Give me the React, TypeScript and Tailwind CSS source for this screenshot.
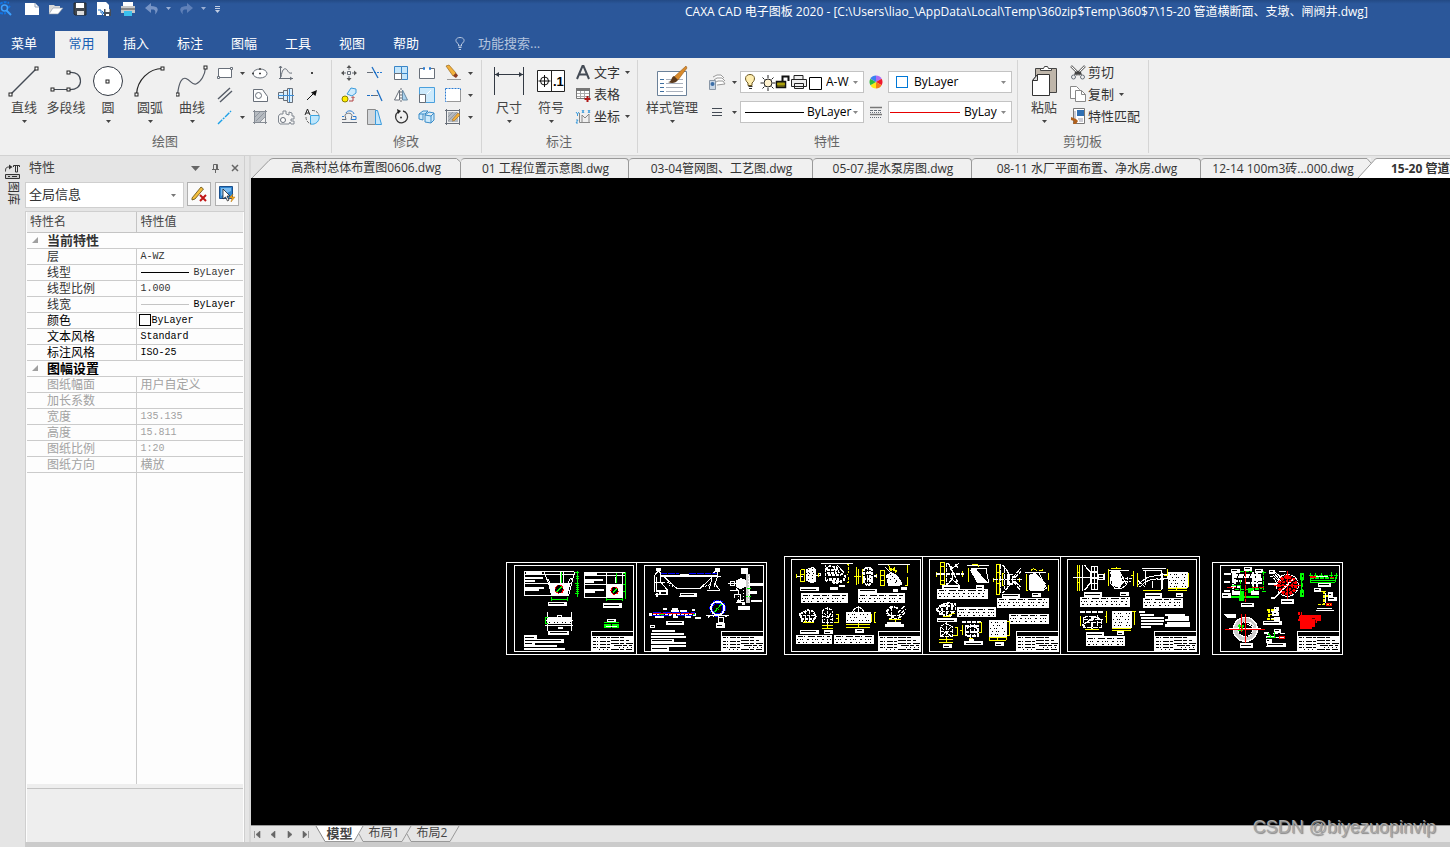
import type { ReactNode } from 'react';

const uiFont = "font-['Open_Sans','Noto_Sans_CJK_SC',sans-serif]";

type IconProps = { w?: number; h?: number; children: ReactNode };

const Icon = ({ w = 18, h = 18, children }: IconProps) => (
  <svg width={w} height={h} viewBox={`0 0 ${w} ${h}`} fill="none" stroke="#686f79" className="shrink-0" aria-hidden="true">
    {children}
  </svg>
);

const Caret = ({ className = 'text-[#444]' }: { className?: string }) => (
  <svg width="5" height="3" viewBox="0 0 5 3" className={`shrink-0 ${className}`} aria-hidden="true">
    <path d="M0 0h5L2.5 3z" fill="currentColor" />
  </svg>
);

const Handle = ({ x, y }: { x: number; y: number }) => (
  <rect x={x - 1.5} y={y - 1.5} width="3" height="3" fill="#fff" stroke="#222" />
);

const drawTools = [
  {
    label: '直线',
    menu: true,
    icon: (
      <Icon w={32} h={34}>
        <path d="M2.500 30.500L28.500 4.500" stroke="#444b55" strokeWidth="1.5" />
        <Handle x={2.5} y={30.5} />
        <Handle x={28.5} y={4.5} />
      </Icon>
    ),
  },
  {
    label: '多段线',
    menu: false,
    icon: (
      <Icon w={32} h={34}>
        <path d="M2.500 25.500H18.500M18.500 8.500c8 -1 12 3 12 8.500s-4 9 -12 8.500" stroke="#444b55" strokeWidth="1.2" />
        <Handle x={2.5} y={25.5} />
        <Handle x={18.5} y={25.5} />
        <Handle x={18.5} y={8.5} />
      </Icon>
    ),
  },
  {
    label: '圆',
    menu: true,
    icon: (
      <Icon w={32} h={34}>
        <circle cx="16" cy="17" r="14.500" fill="#fff" stroke="#333a44" />
        <Handle x={15.5} y={17.5} />
      </Icon>
    ),
  },
  {
    label: '圆弧',
    menu: true,
    icon: (
      <Icon w={32} h={34}>
        <path d="M2.500 30.500C3 16 15 4.500 28.500 4.500" stroke="#222" strokeWidth="1.2" />
        <Handle x={2.5} y={30.5} />
        <Handle x={28.5} y={4.5} />
      </Icon>
    ),
  },
  {
    label: '曲线',
    menu: true,
    icon: (
      <Icon w={32} h={34}>
        <path d="M1.500 30.500C3 18 6 13 10 14.500c5 2 6 7 10 5.500C25 18 29 11 29.500 3.500" stroke="#555b66" strokeWidth="1.2" />
        <Handle x={1.5} y={30.5} />
        <Handle x={29.5} y={3.5} />
      </Icon>
    ),
  },
];

// small tool rows of the drawing group: first tool, has menu, then three plain ones
const drawRows = [
  {
    menu: true,
    tools: [
      {
        name: '矩形',
        icon: (
          <Icon>
            <path d="M2.500 4.500h13v9h-13z" fill="#fff" />
            <path d="M1.500 12.500h2v2h-2zM14.500 3.500h2v2h-2z" fill="#fff" />
          </Icon>
        ),
      },
      {
        name: '椭圆',
        icon: (
          <Icon>
            <ellipse cx="9" cy="9.500" rx="7" ry="4.500" fill="#fff" />
            <path d="M8.500 4.500h1v1h-1zM1.500 9h1v1h-1zM8.500 9h1v1h-1z" stroke="#444" />
          </Icon>
        ),
      },
      {
        name: '公式曲线',
        icon: (
          <Icon>
            <path d="M3.500 2v13M2 14.500h14M4 13C5 6 7 4 9 5s2 5 6 4M2 4l1.500-2L5 4M13 13l2 1.500L13 16" />
          </Icon>
        ),
      },
      {
        name: '点',
        icon: (
          <Icon>
            <rect x="8" y="8" width="2" height="2" fill="#444" stroke="none" />
          </Icon>
        ),
      },
    ],
  },
  {
    menu: false,
    tools: [
      {
        name: '平行线',
        icon: (
          <Icon>
            <path d="M2 13L14 2M4 16L16 5" stroke="#555b66" strokeWidth="1.400" />
          </Icon>
        ),
      },
      {
        name: '孔轴轮廓',
        icon: (
          <Icon>
            <path d="M2.500 3.500h9l5 7v5h-14z" fill="#fff" />
            <circle cx="7.500" cy="9.500" r="3" />
          </Icon>
        ),
      },
      {
        name: '轴',
        icon: (
          <Icon>
            <path d="M1.500 6.500h5v6h-5zM6.500 4.500h4v10h-4zM10.500 2.500h5v14h-5z" fill="#d9efff" />
            <path d="M1 9.500h16M12.500 3v13" stroke="#3b8ed8" />
          </Icon>
        ),
      },
      {
        name: '箭头',
        icon: (
          <Icon>
            <path d="M4 14L13 5" stroke="#111" />
            <path d="M14 4l-1.500 6L8 6.500z" fill="#111" stroke="none" />
          </Icon>
        ),
      },
    ],
  },
  {
    menu: true,
    tools: [
      {
        name: '中心线',
        icon: (
          <Icon>
            <path d="M2 16L15 3" stroke="#1ba0e8" strokeWidth="1.400" strokeDasharray="6 1 2 1" />
          </Icon>
        ),
      },
      {
        name: '剖面线',
        icon: (
          <Icon>
            <path d="M3.500 2v14M14.500 2v14M2 3.500h14M2 14.500h14" stroke="#858b93" />
            <path d="M4 4h10v5l-5 5H4z" fill="#b6bbc1" stroke="none" />
            <path d="M9 14l5-5M4 9l5-5M5 13l8-8" stroke="#9298a0" />
          </Icon>
        ),
      },
      {
        name: '齿轮',
        icon: (
          <Icon>
            <path d="M6 6V3h3v3l3 1V4l3 1v3h2v3h-3v2h3v3h-3l-1-2-1 2H3l-1.500-2V8L3 6z" fill="#f5f5f5" stroke="#808790" />
            <circle cx="6" cy="12" r="2.500" fill="#fff" />
          </Icon>
        ),
      },
      {
        name: '局部放大',
        icon: (
          <Icon>
            <path d="M7.500 7.500H16A7 7 0 017.500 16z" fill="#bfe6fb" stroke="#3aa5e2" />
            <path d="M9 2.500a6.500 6.500 0 017 5M3 9a7 7 0 005 7" stroke="#666" strokeDasharray="3 1" />
            <path d="M2 7L4.500 1 7 7M3 5h3" stroke="#222" />
          </Icon>
        ),
      },
    ],
  },
];

const modifyRows = [
  [
    {
      name: '平移',
      icon: (
        <Icon>
          <path d="M9 1l2.500 3h-5zM9 17l2.500-3h-5zM1 9l3-2.500v5zM17 9l-3-2.500v5z" fill="#555" stroke="none" />
          <path d="M7.500 7.500h3v3h-3zM9 4v2M9 12v2M4 9h2M12 9h2" />
        </Icon>
      ),
    },
    {
      name: '裁剪',
      icon: (
        <Icon>
          <path d="M1 8.500h6" />
          <path d="M8 8.500h9" strokeDasharray="2 1" stroke="#2b7cd3" />
          <path d="M6 3l6 11" stroke="#1d6fc4" strokeWidth="1.300" />
        </Icon>
      ),
    },
    {
      name: '阵列',
      icon: (
        <Icon>
          <path d="M2.500 2.500h7v7h-7zM9.500 2.500h6v7h-6zM9.500 9.500h6v6h-6z" fill="#c5e6fb" stroke="#3a86c8" />
          <path d="M2.500 9.500h7v6h-7z" fill="#fff" />
        </Icon>
      ),
    },
    {
      name: '打断',
      icon: (
        <Icon>
          <path d="M6 4.500H1.500v10h15v-10H12" fill="#fff" />
          <path d="M5.500 3.500h1v2h-1zM11.500 3.500h1v2h-1z" stroke="#2b7cd3" />
        </Icon>
      ),
    },
    {
      name: '删除',
      icon: (
        <Icon>
          <path d="M2 2l3-1 7 8-3 3z" fill="#f2b13c" stroke="#9b6a20" strokeWidth=".7" />
          <path d="M9 12l3-3 2 2.500-2 2.500z" fill="#8d3d20" stroke="none" />
          <path d="M3 15.500h14" stroke="#999" />
        </Icon>
      ),
    },
  ],
  [
    {
      name: '平移复制',
      icon: (
        <Icon>
          <circle cx="5" cy="13" r="3" fill="#ffed00" stroke="#8a8000" />
          <path d="M7 8l4-6 5 1v4l-4 3z" fill="#cdeafc" stroke="#3a9bdc" />
          <path d="M9 15h4v-4M11.500 12L13 10.500l1.500 1.500" stroke="#b04040" />
        </Icon>
      ),
    },
    {
      name: '延伸',
      icon: (
        <Icon>
          <path d="M1 9.500h3M5 9.500h2M8 9.500h2" stroke="#1d6fc4" />
          <path d="M7 9.500h5" />
          <path d="M11 4l5 11" stroke="#1d6fc4" strokeWidth="1.300" />
        </Icon>
      ),
    },
    {
      name: '镜像',
      icon: (
        <Icon>
          <path d="M7.500 4v10h-5z" fill="#fff" />
          <path d="M10.500 4v10h5z" fill="#a9d2ef" stroke="#6b8ba4" />
          <path d="M9 2v14" strokeDasharray="2 1" />
        </Icon>
      ),
    },
    {
      name: '缩放',
      icon: (
        <Icon>
          <path d="M1.500 1.500h15v15h-15z" fill="#cdeafc" stroke="#4aa0dd" />
          <path d="M1.500 8.500h6v8h-6z" fill="#fff" />
          <path d="M13 4l-4 4" stroke="#fff" />
        </Icon>
      ),
    },
    {
      name: '拉伸',
      icon: (
        <Icon>
          <path d="M1.500 2.500h15v13h-15z" fill="#fff" strokeDasharray="2 1" stroke="#2b7cd3" />
          <path d="M3 15.500h14M16.500 4v12" stroke="#999" />
        </Icon>
      ),
    },
  ],
  [
    {
      name: '等距线',
      icon: (
        <Icon>
          <path d="M2 11.500h4l-1-4c0-3 7-3 7 0l-1 4h5M2 14.500h15" />
          <path d="M2 8.500h2M13 8.500h3v3h-5M6 5c1-3 7-3 8 1" stroke="#2b7cd3" />
        </Icon>
      ),
    },
    {
      name: '过渡',
      icon: (
        <Icon>
          <path d="M1.500 1.500h8v15h-8z" fill="#d3d6d9" stroke="#888" />
          <path d="M9.500 2.500h2l4 14h-6z" fill="#c5e6fb" stroke="#3a9bdc" />
        </Icon>
      ),
    },
    {
      name: '旋转',
      icon: (
        <Icon>
          <path d="M6 4a6 6 0 105-1" stroke="#333" strokeWidth="1.300" />
          <path d="M5 1l4 2-3 3z" fill="#222" stroke="none" />
          <circle cx="9" cy="9.500" r="1" fill="#333" stroke="none" />
        </Icon>
      ),
    },
    {
      name: '分解',
      icon: (
        <Icon>
          <path d="M1 6l4-3h5l-3 3zM1 6v5l4 1V6M7 7l4-3 5 1v7l-3 3-6-1zM7 7l6 1 3-3M13 8v7" fill="#cdeafc" stroke="#3a8cc8" />
        </Icon>
      ),
    },
    {
      name: '编辑剖面',
      icon: (
        <Icon>
          <path d="M1 2.500h15M1 15.500h15M2.500 1v16M15.500 1v16" />
          <path d="M4 4h10v10H4z" fill="#b4b9bf" stroke="none" />
          <path d="M4 9l5-5M4 13l9-9M8 14l6-6" stroke="#959ba2" />
          <path d="M8 12l6-7 2 2-6 6z" fill="#f2b13c" stroke="#a06a20" strokeWidth=".6" />
        </Icon>
      ),
    },
  ],
];

const menus = ['插入', '标注', '图幅', '工具', '视图', '帮助'];

const docTabs = [
  { name: '01 工程位置示意图.dwg', width: 'w-[168px]' },
  { name: '03-04管网图、工艺图.dwg', width: 'w-[184px]' },
  { name: '05-07.提水泵房图.dwg', width: 'w-[159px]' },
  { name: '08-11 水厂平面布置、净水房.dwg', width: 'w-[229px]' },
];

const Group = ({ label, className = '', children }: { label: string; className?: string; children: ReactNode }) => (
  <section className={`flex shrink-0 flex-col border-r border-[#d5d5d5] ${className}`} aria-label={label}>
    <div className="flex h-[71px]">{children}</div>
    <div className="pr-px text-center text-[13px] leading-5 text-[#666]">{label}</div>
  </section>
);

const BigButton = ({ label, icon, menu = true, className = 'w-[42px]' }: { label: string; icon: ReactNode; menu?: boolean; className?: string }) => (
  <button type="button" className={`flex shrink-0 flex-col items-center whitespace-nowrap ${className}`}>
    <span className="flex h-[38px] items-end">{icon}</span>
    <span className="text-[13px] leading-[18px] text-[#444]">{label}</span>
    {menu && <Caret className="mt-1 text-[#444]" />}
  </button>
);

const IconButton = ({ name, className = 'w-[26px]', children }: { name: string; className?: string; children: ReactNode }) => (
  <button type="button" aria-label={name} className={`flex h-[22px] shrink-0 items-center justify-center ${className}`}>
    {children}
  </button>
);

const TextButton = ({ label, icon, menu = false }: { label: string; icon: ReactNode; menu?: boolean }) => (
  <button type="button" className="flex h-[22px] items-center gap-px whitespace-nowrap text-[13px] leading-5 text-[#333]">
    {icon}
    {label}
    {menu && <Caret className="ml-1 text-[#444]" />}
  </button>
);

const comboClass = 'flex h-[22px] w-[124px] items-center border border-[#c3c3c3] bg-white pr-[5px] text-[12px] text-black';
const selectClass = 'min-w-0 flex-1 appearance-none overflow-hidden bg-transparent outline-none';

const TitleBar = () => (
  <header className="flex h-[26px] shrink-0 items-start overflow-hidden bg-linear-to-b from-[#234a85] to-[#2b579a] to-15%">
    <div className="flex w-[685px] shrink-0 items-center">
      <svg width="222" height="20" viewBox="0 0 222 20" fill="none" aria-hidden="true">
        <path d="M0 4q4-3 9-1M10 6l-2 2M0 13q3 1 6 0" stroke="#1273e0" strokeWidth="2" strokeDasharray="3 1" />
        <circle cx="4.500" cy="8" r="3" stroke="#3ba0ff" strokeWidth="1.500" />
        <path d="M6.500 10.500L11 15" stroke="#3ba0ff" strokeWidth="2" />
        <path d="M25 3h10l4 4v8H25z" fill="#fff" />
        <path d="M35 3v4h4" stroke="#9aa6b8" />
        <path d="M49 5h5l1 1h5v2h2l-5 6h-8z" fill="#d9d9d9" />
        <path d="M49 14l4-6h10l-5 6z" fill="#fff" stroke="#8b94a3" strokeWidth=".6" />
        <path d="M74 3h12v12H75l-1-1z" fill="#3f4650" stroke="#252a31" />
        <path d="M76 3h8v5h-8z" fill="#fff" />
        <path d="M77 11h7v4h-7z" fill="#ddd" />
        <path d="M97 2h9l3 3v10H97z" fill="#fff" />
        <path d="M98 10h3v3h3M102 11l2 2-2 2" stroke="#1f6fc5" />
        <path d="M104 9h7v7h-7z" fill="#454c57" />
        <path d="M105.500 9h4v3h-4zM106 14h3v2h-3z" fill="#fff" />
        <path d="M123 2h10v4h-10z" fill="#fff" />
        <path d="M121 6h14v7h-14z" fill="#c8c8c8" />
        <path d="M121 9h14" stroke="#444" />
        <path d="M124 11h8v5h-8z" fill="#3bc0ee" />
        <path d="M151 3l-6 5 6 5v-3.500c4-.5 5 1 4 5 5-5 3-8.500-4-8.500z" fill="#7794c5" />
        <path d="M187 3l6 5-6 5v-3.500c-4-.5-5 1-4 5-5-5-3-8.500 4-8.500z" fill="#5f80b8" />
        <path d="M166 7h5l-2.500 3zM201 7h5l-2.500 3z" fill="#9cb0d4" />
        <path d="M215 6.500h5M215 8.500h5" stroke="#c3cfe4" />
        <path d="M215 10h5l-2.500 3z" fill="#c3cfe4" />
      </svg>
    </div>
    <h1 className="whitespace-nowrap text-[12px] leading-6 text-white">
      CAXA CAD 电子图板 2020 - [C:\Users\liao_\AppData\Local\Temp\360zip$Temp\360$7\15-20 管道横断面、支墩、闸阀井.dwg]
    </h1>
  </header>
);

const MenuBar = () => (
  <nav className="flex h-8 shrink-0 items-end bg-[#2b579a] text-[13px] leading-6 text-white">
    <button type="button" className="h-[27px] w-[55px] pb-1 pl-[11px] text-left">
      菜单
    </button>
    <button type="button" className="h-[27px] w-[53px] bg-[#f0f0f0] pb-1 text-[#1a5fb4]">
      常用
    </button>
    <div className="ml-px flex">
      {menus.map((menu) => (
        <button key={menu} type="button" className="h-[27px] w-[54px] pb-1">
          {menu}
        </button>
      ))}
    </div>
    <label className="ml-[20px] flex h-[27px] items-center gap-[11px] pb-[3px]">
      <svg width="14" height="16" viewBox="0 0 14 16" fill="none" stroke="#b9c8e0" aria-hidden="true">
        <path d="M5.500 11V9C1 6 3 2.500 7 2.500S13 6 8.500 9v2zM5.500 12.500h3M6 14.500h2" />
      </svg>
      <input type="text" placeholder="功能搜索..." className="w-[120px] bg-transparent outline-none placeholder:text-[#b4c4de]" />
    </label>
  </nav>
);

const Ribbon = () => (
  <div className="flex h-[98px] shrink-0 overflow-hidden border-b border-[#d2d2d2] bg-[#f0f0f0] py-[2px]">
    <Group label="绘图" className="w-[332px]">
      <div className="flex pl-[3px]">
        {drawTools.map((tool) => (
          <BigButton key={tool.label} {...tool} />
        ))}
      </div>
      <div className="pt-[2px]">
        {drawRows.map((row) => (
          <div key={row.tools[0].name} className="flex items-center">
            <IconButton name={row.tools[0].name} className="w-6">
              {row.tools[0].icon}
            </IconButton>
            <span className="flex w-[10px] justify-center">{row.menu && <Caret />}</span>
            {row.tools.slice(1).map((tool) => (
              <IconButton key={tool.name} name={tool.name}>
                {tool.icon}
              </IconButton>
            ))}
          </div>
        ))}
      </div>
    </Group>

    <Group label="修改" className="w-[150px]">
      <div className="pt-[2px] pl-1">
        {modifyRows.map((row) => (
          <div key={row[0].name} className="flex items-center">
            {row.map((tool) => (
              <IconButton key={tool.name} name={tool.name}>
                {tool.icon}
              </IconButton>
            ))}
            <Caret className="ml-[2px] text-[#444]" />
          </div>
        ))}
      </div>
    </Group>

    <Group label="标注" className="w-[156px]">
      <BigButton
        label="尺寸"
        className="ml-[6px] w-[42px]"
        icon={
          <Icon w={32} h={34}>
            <path d="M1.500 3v28M30.500 3v28M2 10.500h28" stroke="#333a44" />
            <path d="M2 10.500l4-2.500v5zM30 10.500L26 8v5z" fill="#333a44" stroke="none" />
          </Icon>
        }
      />
      <BigButton
        label="符号"
        icon={
          <Icon w={32} h={34}>
            <path d="M2.500 6.500h27v21h-27zM16.500 6.500v21" fill="#fff" stroke="#222" />
            <circle cx="9.500" cy="17" r="4" stroke="#111" />
            <path d="M3.500 17h12M9.500 11v12" stroke="#111" />
            <text x="18" y="22" fill="#000" stroke="none" fontSize="13" fontWeight="bold" fontFamily="Liberation Sans, sans-serif">
              .1
            </text>
          </Icon>
        }
      />
      <div className="pt-px pl-px">
        <TextButton
          label="文字"
          menu
          icon={
            <Icon w={20}>
              <path d="M4 16L9.500 3h1L16 16M6 11.500h8" stroke="#444b55" strokeWidth="2" />
            </Icon>
          }
        />
        <TextButton
          label="表格"
          icon={
            <Icon w={20}>
              <path d="M3.500 3.500h13v10h-13z" fill="#fff" stroke="#777" />
              <path d="M3 3h14v3H3z" fill="#777" stroke="none" />
              <path d="M4 8.500h12M4 11.500h12M7.500 6v7M11.500 6v7" stroke="#aaa" />
              <path d="M14.500 11v6M11.500 14h6" stroke="#b01818" strokeWidth="2" />
            </Icon>
          }
        />
        <TextButton
          label="坐标"
          menu
          icon={
            <Icon w={20}>
              <path d="M6.500 6v9.500H17M9 15V8l3 3 4-4v8" stroke="#888" />
              <path d="M3 5l1.500 2L6 5M4.500 7v2M9 3l2 3M11 3L9 6M15 3l2 3M17 3l-2 3M3 13h2l-2 3h2" stroke="#3a9bdc" />
            </Icon>
          }
        />
      </div>
    </Group>

    <Group label="特性" className="w-[380px]">
      <BigButton
        label="样式管理"
        className="ml-1 w-[60px]"
        icon={
          <Icon w={32} h={34}>
            <path d="M1.500 7.500h29v24h-29z" fill="#fff" stroke="#6b8199" />
            <path d="M4 15.500h4M4 19.500h4M4 23.500h4M4 27.500h4" stroke="#3f6f9f" />
            <path d="M10 15.500h17M10 19.500h17M10 23.500h17M10 27.500h17" stroke="#aab1bd" />
            <path d="M30 2l1 2-9 12-4-3z" fill="#d88a2c" stroke="#9a5c17" strokeWidth=".6" />
            <path d="M18 12l4 4c-2 3-6 4-10 2 4 0 3-5 6-6z" fill="#5c3a1c" stroke="none" />
          </Icon>
        }
      />
      <div className="flex flex-col gap-2 pt-[11px]">
        <div className="flex items-center">
          <IconButton name="图层" className="w-[30px]">
            <Icon w={18}>
              <path d="M5 4l4-2h4l3 3M6 7l3-2h5l3 3M8 9l2-1h5l2 3-8 1" fill="#fff" stroke="#999" />
              <path d="M1.500 7.500h6v9h-6z" fill="#c9d7e6" stroke="#8a97a6" />
              <circle cx="4.500" cy="11" r="2" fill="#3b6ea8" stroke="none" />
            </Icon>
          </IconButton>
          <Caret className="mr-[3px] text-[#444]" />
          <div className={comboClass}>
            <svg width="82" height="20" viewBox="0 0 82 20" fill="none" stroke="#222" className="mr-[3px] shrink-0" aria-hidden="true">
              <path d="M7 13.500V11c-4-3-3-8.500 2-8.500s6 5.500 2 8.500v2.500z" fill="#ffeeb0" stroke="#6b5720" />
              <path d="M7.500 14.500h4M8 16.500h3" stroke="#333" />
              <circle cx="27" cy="11" r="4" fill="#fff3cf" />
              <path d="M27 3v3M27 16v3M19.500 11h3M31.500 11h3M21.500 5.500l2 2M30.500 14.500l2 2M32.500 5.500l-2 2M23.500 14.500l-2 2" />
              <path d="M35.500 9.500h9v6h-9z" fill="#777014" stroke="#111" strokeWidth="1.500" />
              <path d="M36 12h8" stroke="#dccc00" />
              <path d="M41.500 9V4.500h6V9" stroke="#111" strokeWidth="2" />
              <path d="M53 7V3.500h9V7M50.500 7.500h15v7h-15zM53.500 11.500h9v5h-9z" fill="#eee" />
              <path d="M68.500 5.500h12v12h-12z" fill="#fff" stroke="#000" />
            </svg>
            <select aria-label="当前图层" className={selectClass}>
              <option>A-WZ</option>
            </select>
            <Caret className="ml-1 text-[#888]" />
          </div>
          <IconButton name="颜色" className="w-6">
            <Icon w={14} h={14}>
              <g stroke="none">
                <path d="M7 7L7 .500A6.500 6.500 0 0112.600 3.800z" fill="#b06cf0" />
                <path d="M7 7l5.600-3.200a6.500 6.500 0 010 6.400z" fill="#f0182c" />
                <path d="M7 7l5.600 3.200A6.500 6.500 0 017 13.500z" fill="#f57f17" />
                <path d="M7 7v6.500a6.500 6.500 0 01-5.600-3.300z" fill="#ffe81a" />
                <path d="M7 7l-5.600 3.200a6.500 6.500 0 010-6.400z" fill="#2fbb3f" />
                <path d="M7 7L1.400 3.800A6.500 6.500 0 017 .500z" fill="#3b80f2" />
              </g>
            </Icon>
          </IconButton>
          <div className={`${comboClass} pl-[7px]`}>
            <span className="mr-[6px] size-3 shrink-0 border border-[#0078d7]" />
            <select aria-label="当前颜色" className={selectClass}>
              <option>ByLayer</option>
            </select>
            <Caret className="ml-1 text-[#888]" />
          </div>
        </div>
        <div className="flex items-center">
          <IconButton name="线宽" className="w-[30px]">
            <Icon w={10} h={10}>
              <path d="M0 1.500h10M0 5.500h10M0 8.500h10" stroke="#444b55" />
            </Icon>
          </IconButton>
          <Caret className="mr-[3px] text-[#444]" />
          <div className={`${comboClass} pl-1`}>
            <span className="mr-[3px] h-px w-[59px] shrink-0 bg-black" />
            <select aria-label="当前线型" className={selectClass}>
              <option>ByLayer</option>
            </select>
            <Caret className="ml-px text-[#888]" />
          </div>
          <IconButton name="线型" className="w-6">
            <Icon w={12} h={12}>
              <path d="M0 1.500h12M0 8.500h12" stroke="#777" strokeWidth="1.500" />
              <path d="M0 4.500h12" strokeDasharray="3 1" />
              <path d="M0 6.500h12M0 11.500h12" strokeDasharray="1 1" />
            </Icon>
          </IconButton>
          <div className={`${comboClass} pl-px`}>
            <span className="mr-[4px] h-px w-[70px] shrink-0 bg-[#e60000]" />
            <select aria-label="当前线宽" className={selectClass}>
              <option>ByLayer</option>
            </select>
            <Caret className="ml-1 text-[#888]" />
          </div>
        </div>
      </div>
    </Group>

    <Group label="剪切板" className="w-[131px]">
      <BigButton
        label="粘贴"
        className="ml-[5px] w-[42px]"
        icon={
          <Icon w={32} h={34}>
            <path d="M7.500 4.500h21v24h-21z" fill="#bfb6aa" stroke="#444" />
            <path d="M12.500 6.500v-2h3l1-2h3l1 2h3v2z" fill="#fff" stroke="#444" />
            <path d="M9.500 10.500h12v21h-17v-15z" fill="#fff" stroke="#333" />
            <path d="M4.500 16.500h5v-6z" fill="#ddd" stroke="#333" />
          </Icon>
        }
      />
      <div className="pt-px pl-1">
        <TextButton
          label="剪切"
          icon={
            <Icon>
              <path d="M2 3l9 9M16 3l-9 9" stroke="#777" strokeWidth="2.500" />
              <path d="M2.500 3.500l7 7M15.500 3.500l-7 7" stroke="#fff" />
              <path d="M6 9l3-1 3 1 1 3-4-1-4 1z" fill="#444" stroke="none" />
              <circle cx="4.500" cy="14" r="2" />
              <circle cx="13.500" cy="14" r="2" />
            </Icon>
          }
        />
        <TextButton
          label="复制"
          menu
          icon={
            <Icon>
              <path d="M1.500 1.500h6l3 3v9h-9z" fill="#fff" stroke="#888" />
              <path d="M6.500 5.500h6l4 4v7h-10z" fill="#fff" stroke="#888" />
              <path d="M12.500 5.500v4h4" stroke="#888" />
            </Icon>
          }
        />
        <TextButton
          label="特性匹配"
          icon={
            <Icon>
              <path d="M4.500 1.500h11v15h-11z" fill="#fff" stroke="#777" />
              <path d="M8 3h7v6H8z" fill="#2f6fb3" stroke="none" />
              <path d="M6 4v8M9 12h5M10 14h4" stroke="#99a" />
              <path d="M2 10l5 2 2 2-2 3H4l1-3-3-1z" fill="#b0601c" stroke="none" />
            </Icon>
          }
        />
      </div>
    </Group>
  </div>
);

type Property = { name: string; value?: ReactNode; tone: string };

const dark = 'text-[#333]';
const black = 'text-black';
const muted = 'text-[#a2a2a2]';

const currentProps: Property[] = [
  { name: '层', value: 'A-WZ', tone: dark },
  {
    name: '线型',
    value: (
      <span className="flex items-center gap-[5px]">
        <span className="h-px w-12 bg-black" />
        ByLayer
      </span>
    ),
    tone: dark,
  },
  { name: '线型比例', value: '1.000', tone: dark },
  {
    name: '线宽',
    value: (
      <span className="flex items-center gap-[5px] text-black">
        <span className="h-px w-12 bg-[#c4c4c4]" />
        ByLayer
      </span>
    ),
    tone: dark,
  },
  {
    name: '颜色',
    value: (
      <span className="flex items-center gap-px">
        <span className="-ml-[2px] size-3 border border-black" />
        ByLayer
      </span>
    ),
    tone: black,
  },
  { name: '文本风格', value: 'Standard', tone: black },
  { name: '标注风格', value: 'ISO-25', tone: black },
];

const sheetProps: Property[] = [
  { name: '图纸幅面', value: '用户自定义', tone: muted },
  { name: '加长系数', tone: muted },
  { name: '宽度', value: '135.135', tone: muted },
  { name: '高度', value: '15.811', tone: muted },
  { name: '图纸比例', value: '1:20', tone: muted },
  { name: '图纸方向', value: '横放', tone: muted },
];

const isChinese = (value: ReactNode) => typeof value === 'string' && value.charCodeAt(0) > 255;

const PropertyGroup = ({ title, rows, tone }: { title: string; rows: Property[]; tone: string }) => (
  <tbody>
    <tr className="h-4 border-b border-[#cbcbcb]">
      <th colSpan={2} scope="rowgroup" className={`p-0 text-left font-bold ${tone}`}>
        <span className="flex h-[15px] items-center">
          <svg width="20" height="6" viewBox="0 0 20 6" className="shrink-0" aria-hidden="true">
            <path d="M11 0v6H5z" fill="#a0a0a0" />
          </svg>
          <span className="text-[13px] leading-[15px]">{title}</span>
        </span>
      </th>
    </tr>
    {rows.map((row) => (
      <tr key={row.name} className={`h-4 border-b border-[#cbcbcb] ${row.tone}`}>
        <th scope="row" className="border-r border-[#cbcbcb] py-0 pr-0 pl-5 text-left font-normal">
          {row.name}
        </th>
        <td
          className={`overflow-hidden py-0 pr-0 pl-1 whitespace-nowrap ${
            isChinese(row.value) ? '' : "font-['Liberation_Mono',monospace] text-[10px] leading-[15px]"
          }`}
        >
          {row.value}
        </td>
      </tr>
    ))}
  </tbody>
);

const PropertyPanel = () => (
  <aside className="flex w-[220px] shrink-0 flex-col border-r border-[#cfcfcf]">
    <div className="flex h-[26px] shrink-0 items-center pr-[5px] pb-[2px] pl-1 text-[13px] text-[#444]">
      <h2 className="flex-1">特性</h2>
      <button type="button" aria-label="选项" className="mr-3">
        <svg width="9" height="5" viewBox="0 0 9 5">
          <path d="M0 0h9L4.500 5z" fill="#666" />
        </svg>
      </button>
      <button type="button" aria-label="固定" className="mr-3">
        <svg width="7" height="9" viewBox="0 0 7 9" fill="none" stroke="#666">
          <path d="M1.500 5V.500h4V5M4.500 1v4M0 5.500h7M3.500 6v3" />
        </svg>
      </button>
      <button type="button" aria-label="关闭">
        <svg width="8" height="8" viewBox="0 0 8 8" stroke="#666" strokeWidth="1.500">
          <path d="M1 1l6 6M7 1L1 7" />
        </svg>
      </button>
    </div>
    <div className="flex h-[26px] shrink-0 items-start gap-[3px] pr-[5px]">
      <div className="flex h-[26px] min-w-0 flex-1 items-center border border-[#cfcfcf] bg-white pr-[7px] pl-[3px] text-[13px] text-[#333]">
        <select aria-label="对象" className={selectClass}>
          <option>全局信息</option>
        </select>
        <Caret className="text-[#777]" />
      </div>
      <button type="button" aria-label="清除选择" className="flex size-6 items-center justify-center border border-[#b0b0b0] bg-[#fafafa]">
        <Icon>
          <path d="M2 13L11 2l2.500 2L5 14l-3 1z" fill="#f3bd3d" stroke="#5c4a10" strokeWidth=".8" />
          <path d="M10 10l6 6M16 10l-6 6" stroke="#c01515" strokeWidth="2" />
        </Icon>
      </button>
      <button type="button" aria-label="快速选择" className="ml-px flex size-6 items-center justify-center border border-[#b0b0b0] bg-[#fafafa]">
        <Icon>
          <path d="M1.500 1.500h13v12h-13z" fill="#2f86d0" stroke="#1b4f8c" />
          <path d="M3 3h10v3L3 11z" fill="#7cbcf0" stroke="none" />
          <path d="M5 4v10l2.500-2 2 4 1.500-1-2-4h3z" fill="#fff" stroke="#222" strokeWidth=".8" />
          <path d="M15 9l-4 4h3l-1 4 4-5h-3z" fill="#f7a81b" stroke="#b9770c" strokeWidth=".5" />
        </Icon>
      </button>
    </div>
    <div className="mt-[3px] flex min-h-0 flex-1 flex-col border border-r-0 border-b-0 border-[#cfcfcf] bg-[#fdfdfd] px-px">
      <table className="w-full table-fixed border-collapse text-[12px] leading-[15px]">
        <colgroup>
          <col className="w-[109px]" />
          <col />
        </colgroup>
        <thead>
          <tr className="h-5 border-b border-[#c4c4c4] bg-[#f0f0f0] text-left text-[#444]">
            <th scope="col" className="border-r border-[#c4c4c4] py-0 pr-0 pl-[3px] font-normal">
              特性名
            </th>
            <th scope="col" className="py-0 pr-0 pl-1 font-normal">
              特性值
            </th>
          </tr>
        </thead>
        <PropertyGroup title="当前特性" rows={currentProps} tone={dark} />
        <PropertyGroup title="图幅设置" rows={sheetProps} tone={black} />
      </table>
      <div className="flex-1 pl-[109px]">
        <div className="h-full border-l border-[#cbcbcb]" />
      </div>
      <div className="h-1 bg-[#eee]" />
      <div className="h-[54px] border-t border-[#c4c4c4] bg-[#eee]" />
    </div>
  </aside>
);

const Sheet = ({ x, y, w }: { x: number; y: number; w: number }) => (
  <g>
    <rect x={x} y={y} width={w} height={304.5 - y} stroke="#fff" strokeWidth="3" />
    <path d={`M${x + w - 127} 305v-60h126`} stroke="#fff" strokeWidth="3" />
    <rect x={x + w - 125} y="258" width="125" height="45" fill="#fff" />
    <g transform={`translate(${x + w - 125} 0)`} stroke="#000" strokeWidth="3">
      <path d="M3 263.500h62M3 275.500h52M3 284.500h52M3 293.500h52" strokeDasharray="9 3 3 6 18 3" />
      <path d="M57 262.500h42M57 270.500h55M57 279.500h66M66 287.500h54M57 299.500h64" strokeDasharray="24 3 12 6" />
      <path d="M80 293.500h42M20 299.500h34" strokeDasharray="3 9" />
    </g>
  </g>
);

const Label = ({ x, y, w = 50 }: { x: number; y: number; w?: number }) => (
  <g>
    <rect x={x} y={y} width={w} height="10" fill="#fff" />
    <path d={`M${x + 4} ${y + 5}h${w - 9}`} stroke="#000" strokeWidth="3" />
  </g>
);

const Schedule = ({ x, y, w, h = 29 }: { x: number; y: number; w: number; h?: number }) => (
  <g stroke="#000" strokeWidth="3">
    <rect x={x} y={y} width={w} height={h} fill="#fff" stroke="none" />
    <path d={`M${x + 6} ${y + 5}h${w - 12}`} strokeDasharray="14 4 3 9 22 6" />
    <path d={`M${x + 4} ${y + 14}h${w - 8}`} strokeDasharray="3 6 3 3 3 12 6 9" />
    <path d={`M${x + 6} ${y + 23}h${w - 12}`} strokeDasharray="6 10 3 6 3 15" />
  </g>
);

// rubble / concrete block with speckled fill
const Speckle = ({ x, y, w, h }: { x: number; y: number; w: number; h: number }) => (
  <g>
    <rect x={x} y={y} width={w} height={h} fill="#fff" />
    <path
      d={`M${x + 5} ${y + 6}h${w - 9}M${x + 11} ${y + 15}h${w - 14}M${x + 4} ${y + 24}h${w - 8}${h > 40 ? `M${x + 9} ${y + 33}h${w - 12}M${x + 6} ${y + 42}h${w - 10}` : ''}`}
      stroke="#000"
      strokeWidth="3"
      strokeDasharray="3 9 3 3 3 15 3 6"
    />
  </g>
);

const Drawing = () => (
  <svg
    width="850"
    height="115"
    viewBox="0 0 2550 345"
    fill="none"
    strokeWidth="3"
    shapeRendering="crispEdges"
    role="img"
    aria-label="图纸"
    className="absolute top-[372px] left-[249px]"
  >
    <g stroke="#fff">
      <path d="M19.500 37.500h780v276h-780zM409.500 37.500v276" />
      <Sheet x={43.5} y={46.5} w={357} />
      <Sheet x={433.5} y={46.5} w={357} />

      <path d="M72 64.500h150M72 74.500h150M72 64v72M72 101.500h80M72 135.500h80M133 66l25 70h48l18-70M180 66v32M190 66v32" />
      <path d="M78 69.500h48M75 84.500h55M75 91.500h30M75 113.500h57M75 120.500h42" strokeWidth="6" />
      <path d="M144 99h68l-10 38h-48z" fill="#fff" stroke="none" />
      <path d="M144 88l6 10M212 84l-8 14M212 84l6 6" />
      <circle cx="178" cy="118" r="12" fill="#000" stroke="#f00" strokeDasharray="14 5" />
      <path d="M170 126l16-16M184 66v34" stroke="#0f0" />
      <path d="M153 148.500h51M154 142v10M203 142v10M232.500 64v76M226 66h12M226 100h12M226 130h12" stroke="#0f0" />
      <path d="M232.500 78v10M232.500 106v20" stroke="#0f0" strokeWidth="8" strokeDasharray="3 3" />
      <Label x={144} y={156} w={54} />

      <path d="M253 67.500h125M253 77h125M253 67v76M253 103h66M253 143h66M319 67v76M368 67v76M346 80v20" />
      <path d="M256 72.500h35M256 88.500h54M256 95.500h25M256 118.500h57M256 125.500h30" strokeWidth="6" />
      <path d="M319 102h49v42h-49z" fill="#fff" stroke="none" />
      <circle cx="344" cy="122" r="11" fill="#000" stroke="#f00" strokeDasharray="12 5" />
      <path d="M338 128l12-12M349.500 68v30M376.500 66v80M370 70h8M370 103h8M370 125h8M320 148.500h48M320 144v9M368 144v9" stroke="#0f0" />
      <Label x={309} y={161} w={54} />

      <path d="M142.500 186v56M214.500 186v56M134 210.500h84M134 226.500h84M172 196h13v6h-13z" />
      <path d="M145 201h69v22h-69z" fill="#fff" stroke="none" />
      <path d="M148 217h64" stroke="#000" strokeDasharray="3 12 3 6" />
      <path d="M136.500 201v22M134 203h10M134 221h10" stroke="#0f0" />
      <path d="M174 233h14" strokeWidth="6" />
      <Label x={146} y={243} w={60} />
      <Label x={321} y={207} w={26} />
      <path d="M312 216h44v18h-44z" fill="#0f0" stroke="none" />
      <path d="M312 220h44M333.500 218v16" stroke="#000" />
      <path d="M318 229h34" stroke="#fff" />

      <Label x={72} y={257} w={36} />
      <Label x={72} y={267} w={117} />
      <Label x={72} y={276} w={30} />
      <path d="M72 288h98M72 297h122" strokeWidth="6" />

      <path d="M480 66v10h172V66M480 80h182M494 82l36 33h70l36-33M468 58l12 8M474 64l-12 14M464 78v48M470 82v40M482 82v14M652 82l-10 28M636 82l-8 36M622 122h38M644 100l16 22" />
      <path d="M468 56l12 8-4 6M644 58h16M640 68l18-10" />
      <path d="M470 56h10v6h-10zM645 55h14v8h-14z" fill="#fff" />
      <path d="M482 77.500h170M540 73.500h28" />
      <path d="M482 70.500h56M568 70.500h84" stroke="#00f" strokeDasharray="20 3" />
      <path d="M466 96h30M468 120h34l-20-24M466 132h36" />
      <path d="M468 124h34M470 130v10M502 124v12M480 126v8" strokeWidth="6" />
      <path d="M500 96l26 12M506 104l4 4M516 106l4 4M630 104l-24 8" strokeDasharray="6 3" />
      <Label x={540} y={129} w={48} />
      <path d="M538 139h52" />

      <path d="M724 55h18v16h-18z" fill="#fff" />
      <path d="M736.500 72h12v86h-12z" fill="#ccc" stroke="none" />
      <path d="M708 94l14-8 14 4v20l-16 6-12-6z" fill="#fff" />
      <path d="M684 100h24M690 94v12h14V96zM690 120h20v-6l8 20h-16v10M712 150h20M708 158h26M722 132v24M748 78v60" />
      <path d="M750 103.500h38M750 127h20M752 153h34M712 153h10M726 160h10" strokeWidth="7" />
      <path d="M740 115h12M738 139h14" stroke="#0f0" />
      <path d="M744 74v80M730 112v44M716 120v34" stroke="#fff" strokeDasharray="3 6" />
      <path d="M714 168h34v10h-34z" fill="#fff" />

      <path d="M448 192h140" strokeWidth="9" strokeDasharray="9 3" />
      <path d="M460 188h124M456 196h60M530 196h50" stroke="#00f" strokeWidth="5" strokeDasharray="24 4" />
      <path d="M458 191.500h124" stroke="#f00" strokeDasharray="40 4" />
      <path d="M488 178h12M516 178h18M514 182h22M540 182h20M576 180h8M466 200h26M520 202h14M556 201h16M586 204h16" strokeWidth="6" />
      <path d="M478 194h14M578 192h6" stroke="#0f0" />
      <Label x={500} y={213} w={50} />
      <circle cx="653" cy="175" r="20" strokeWidth="5" />
      <circle cx="653" cy="175" r="16" stroke="#00f" strokeDasharray="14 3" />
      <circle cx="653" cy="175" r="24" stroke="#00f" strokeDasharray="8 4" />
      <path d="M644 186l20-24M648 174l8 4" stroke="#0f0" />
      <path d="M618 196h70M624 202l6-6M640 200l5-4M676 202l6-6M654 196v22M654 202h16v14h-16z" />
      <Label x={648} y={221} w={24} />
      <path d="M451.500 226.500h12v6h-12z" />
      <path d="M456 243h68M453 252h98M453 261h105M453 280h104M453 288h104" strokeWidth="6" />
      <Label x={453} y={267} w={68} />
      <Label x={453} y={290} w={53} />
    </g>

    <g transform="translate(840 0)" stroke="#fff">
      <path d="M13.500 19.500h1245v294h-1245zM427.500 19.500v294M841.500 19.500v294" />
      <Sheet x={34.5} y={28.5} w={387} />
      <Sheet x={448.5} y={28.5} w={387} />
      <Sheet x={862.5} y={28.5} w={387} />

      <path d="M78 60l20-8 8 8v34l-10 4-18-8z" fill="#fff" />
      <path d="M78 70h28M86 56v40M96 54v40" stroke="#000" strokeDasharray="3 7" />
      <path d="M106 76h16v-6h-8M50 78h20" />
      <path d="M62 60v34h12V58zM50 72v12M62 74h14M116 70v12" stroke="#ff0" />
      <path d="M124 41h94M136 44l4 14M160 48l8 20M172 46l20 22" />
      <path d="M136 58l14-10 20 4 6 14 20 12-6 16-26 6-16-12-12 6z" stroke="#fff" strokeWidth="5" strokeDasharray="9 3" />
      <path d="M142 60h28M142 68h30M144 76h40M148 86h30M156 94h30" strokeWidth="6" strokeDasharray="9 3" />
      <path d="M200 44h6v22l-4 8M206 80v16h-6" stroke="#ff0" strokeDasharray="9 3" />
      <path d="M150 116h24M178 108h18" strokeWidth="8" />
      <Label x={60} y={112} w={54} />
      <Schedule x={63} y={130} w={140} />

      <path d="M230 52v52M236 58v44M246 56v46M222 78h20M288 72v12" stroke="#ff0" />
      <path d="M252 58q14-12 24 0v40q-10 16-24 0zM246 68h34M250 86h30M262 52v54M270 52v54M282 78h12" strokeWidth="5" strokeDasharray="9 3" />
      <path d="M302 62v44h12V60zM302 76h12M302 90h12M326 46l6 16 14-10M382 44v24M382 80v26h-6" stroke="#ff0" />
      <path d="M294 43h96M314 50l52 54" />
      <path d="M318 76l14-10 20 10 14 22-6 10h-36z" fill="#fff" stroke="none" />
      <path d="M322 84l30 16M330 72l24 26" stroke="#000" strokeDasharray="3 6" />
      <path d="M328 56l20 6-2 8" stroke="#ff0" strokeWidth="5" />
      <Label x={236} y={117} w={54} />
      <path d="M362 115h20M338 122h16" strokeWidth="8" />
      <Schedule x={234} y={130} w={140} />

      <path d="M60 192l24-12 16 4 8 16-10 14H66zM56 196h52M64 206h40M76 182v30M88 182v30" strokeWidth="5" strokeDasharray="9 3" />
      <path d="M68 216h34M76 210v8" stroke="#ff0" />
      <Label x={60} y={240} w={54} />
      <path d="M126.500 182v36h32v-36l-16-8zM130 200h26M142 170v60M132 190l22 20M154 190l-22 20" strokeDasharray="9 3" />
      <path d="M126 226h32M126 235h32M142 222v14M162 216h12v-24h-6M168 204h8" stroke="#ff0" />
      <Label x={132} y={241} w={24} />
      <Schedule x={48} y={254} w={108} />
      <Schedule x={162} y={254} w={120} />
      <Speckle x={198} y={186} w={72} h={30} />
      <path d="M216 186q20-28 36 0M236 168v50M222 184l28 20" stroke="#fff" />
      <path d="M198 223h72M198 232h72M236 218v14M274 192v24M288 186h-6v30h6" stroke="#ff0" />
      <Label x={226} y={237} w={24} />
      <path d="M318 186l16-16 20 4M354 188l20-20M326 206q26 10 50-20M322 196h36l18-18M320 188l30 20M334 172v34" strokeWidth="5" strokeDasharray="12 3" />
      <path d="M328 208h36M346 206v14" stroke="#ff0" />
      <path d="M316 226h56M322 218h40" strokeWidth="7" />

      <path d="M482 38v64h10V38zM482 50h10M482 70h10M482 90h10M470 66v14M546 64v16" stroke="#ff0" />
      <path d="M500 38l18 16v34l-18 16zM468 72h84M512 60l24-20M512 84l24 20M508 46l26 50M526 44l10 10M526 98l10-10" strokeWidth="4" strokeDasharray="12 3" />
      <path d="M560 47h66M574 54h44l8 44h-34z" />
      <path d="M572 60l12-6 28 34 12 10h-32z" fill="#fff" />
      <path d="M564.500 54v42M576 44h18l4 8M640 84v12" stroke="#ff0" />
      <Label x={488} y={106} w={50} />
      <Label x={588} y={106} w={22} />
      <Schedule x={471} y={117} w={152} />

      <path d="M470 178l28-20 28 4v18l-16 18-30-6zM476 168h50M474 184h46M486 162v32M500 158v38M516 160v28" strokeWidth="5" strokeDasharray="9 3" />
      <path d="M490 200h20M504 196l20-6" stroke="#ff0" />
      <Label x={471} y={205} w={57} />
      <Schedule x={531} y={172} w={118} />
      <path d="M480 258v-28l18-10 18 10v28zM498 214v52M480 244h36M484 232l28 26M512 232l-28 26" strokeDasharray="12 3" />
      <path d="M478 268h40M478 277h40M498 262v14M520 256h12v-24h-6" stroke="#ff0" />
      <Label x={489} y={283} w={24} />
      <path d="M546 216h58M556 228h38v30h-36zM560 236q20-18 34 4M556 246h38M572 222v44M584 222v40" strokeWidth="4" strokeDasharray="12 3" />
      <path d="M546 226v30M541 240h8M598 216h6v32h-6M566 266h14" stroke="#ff0" />
      <path d="M566 269h16" strokeWidth="6" />
      <Label x={553} y={274} w={54} />
    </g>

    <g transform="translate(1440 0)" stroke="#fff">
      <path d="M48 43v90h9V43zM48 66h9M48 100h9M72 70h-4v36h4M118 84v12" stroke="#ff0" />
      <path d="M62 42v88M68 44l20 28v34l-20 24M38 88h90M84 74h14v28h-14zM98 84l24-30M98 94l24 26M104 84l20-22M104 94l18 18M74 54v62" strokeWidth="4" strokeDasharray="15 3" />
      <path d="M136 67h62M148 76l28-10 24 48-12 8h-36z" />
      <path d="M148 76l16-6 32 30-6 20h-40z" fill="#fff" />
      <path d="M139.500 72v50h5M152 62l8-6 12 6M176 62h10v-6M206 68v22M204 104v18" stroke="#ff0" />
      <Label x={66} y={132} w={52} />
      <Label x={156} y={129} w={24} />
      <Schedule x={51} y={144} w={156} />
      <Schedule x={87} y={192} w={120} />
      <Speckle x={27} y={210} w={52} h={49} />
      <path d="M27 262h51M27 271h51M27 260v10M52 262v9M78 260v10M80 214h8v42h-6" stroke="#ff0" />
      <Label x={45} y={277} w={24} />

      <path d="M292 44v78M299 44v78M292 68h7M292 98h7M374 70v14" stroke="#ff0" />
      <path d="M308 44v78M314 46l18 22v30l-18 22M334 50h18v68h-18zM280 82h92M334 66h18M334 84h18M334 100h18M343 50v66M356 74h16v14h-16z" strokeWidth="4" />
      <path d="M386.500 58v50M394 54h30M408 50v8M460 62v46M454 76h8" stroke="#ff0" />
      <path d="M386 62h60M396 64h22l22 40-14 10h-22l-14-16z" />
      <path d="M392 66l24-2 12 34-10 14-20-6z" fill="#fff" />
      <path d="M422 86h34M424 94h30M430 80v20M442 80v20" strokeWidth="4" strokeDasharray="9 3" />
      <Label x={312} y={128} w={52} />
      <Label x={420} y={127} w={24} />
      <Schedule x={300} y={141} w={150} />
      <path d="M486 56h72M490 62h54v58M546 68v50M476 104q26-32 66-26M478 112q30-34 74-22M474 92l20 18M496 64v40M540 72h22v14h-22M516 94v20" />
      <path d="M472.500 70v40M490 122h52M562 56v20M552 76h12" stroke="#ff0" />
      <Speckle x={564} y={66} w={57} h={46} />
      <path d="M564 114h56M564 120h56M624.500 68v42M590 110v10" stroke="#ff0" />
      <Label x={495} y={131} w={50} />
      <Label x={588} y={130} w={20} />
      <Schedule x={489} y={144} w={120} />

      <path d="M300 186h72M310 204q20-12 54 4v24h-52zM316 218h46M306 226l40-26M336 198v38M352 196v36M308 208h60" strokeWidth="4" strokeDasharray="15 3" />
      <path d="M301 198v30M314 238h42M380 184v34M374 200h6" stroke="#ff0" />
      <Speckle x={396} y={183} w={57} h={48} />
      <path d="M396 234h56M396 241h56M464.500 184v42M456 184h12" stroke="#ff0" />
      <Label x={318} y={247} w={52} />
      <Label x={411} y={244} w={20} />
      <Schedule x={318} y={259} w={117} />
      <path d="M478 186h16M480 195h42M482 204h70M482 212h70M482 221h68M484 230h30M556 194h58M564 202h62M556 210h70M562 219h68M556 226h74" strokeWidth="7" />
    </g>

    <g transform="translate(2115 0)" stroke="#fff">
      <path d="M22.500 37.500h390v276h-390z" />
      <Sheet x={46.5} y={46.5} w={357} />
      <Label x={78} y={57} w={24} />
      <Label x={117} y={51} w={22} />
      <Label x={150} y={57} w={22} />
      <path d="M56 72h22M56 96h18M148 88h24M56 122h18" strokeWidth="7" />
      <Label x={51} y={131} w={24} />
      <path d="M84 66v60M90 68v44M144 66v56M156 62v54M84 74h84M84 92h26M140 100h32M78 112h30M120 100h22M82 82h88" strokeWidth="6" strokeDasharray="15 3" />
      <path d="M104 64h38M106 90v50M80 106h28M90 118h70v22H84M134 114h36M142 108v26M78 142h84M176 64v60M170 68h12M172 124h10" stroke="#0f0" strokeDasharray="12 3" />
      <path d="M102 122h14v32h-14zM78 138h84v6H78zM130 114h14v16h-14z" fill="#0f0" stroke="none" />
      <path d="M121.500 64v92M66 112.500h26M140 112.500h36" stroke="#f00" strokeDasharray="18 3" />
      <path d="M82 122h22v12H82zM138 122h24v12h-24z" fill="#fff" stroke="none" />
      <Label x={108} y={159} w={38} />

      <path d="M190 102h30M198 144h10l50-52" strokeWidth="4" />
      <path d="M194 66h14M194 78h10" />
      <Label x={192} y={60} w={16} />
      <path d="M206 62l26 24M206 68l20 24M206 76l18 20M206 84l12 20M222 63h22" />
      <circle cx="247" cy="106" r="33" strokeDasharray="12 3" />
      <circle cx="247" cy="106" r="25" stroke="#f00" strokeWidth="10" strokeDasharray="9 3" />
      <circle cx="247" cy="106" r="14" stroke="#f00" strokeWidth="7" strokeDasharray="6 4" />
      <path d="M247.500 64v82M206 106h82" stroke="#f00" />
      <path d="M208 144l56-56" strokeDasharray="6 3" />
      <path d="M291 70v20M291 120v22" stroke="#0f0" strokeWidth="12" />
      <path d="M291 70v72" stroke="#0f0" strokeWidth="6" />
      <path d="M291 76v60" stroke="#000" strokeDasharray="6 12" />
      <Label x={228} y={149} w={38} />

      <path d="M312 76h86M316 84h80" stroke="#0f0" strokeWidth="5" strokeDasharray="12 3" />
      <path d="M318 91h72M318 96h72M330 68v14M350 68v12M380 66v14M316 70v28M394 68v14M390 88v8" stroke="#0f0" />
      <path d="M314 81h20M374 82h14" stroke="#f00" strokeWidth="5" />
      <path d="M334 78h36" />
      <Label x={339} y={99} w={38} />
      <Label x={327} y={114} w={20} />
      <path d="M348 124h14M356 124v40M340 163h38M360 138h10" stroke="#ff0" strokeWidth="5" strokeDasharray="9 3" />
      <path d="M362 128v32" />
      <Label x={369} y={128} w={14} />
      <Label x={369} y={141} w={24} />
      <path d="M364 160h14v6h-14z" stroke="#f00" />
      <path d="M332 181h56M336 175h46" />

      <path d="M54 192h38v12H66z" fill="#fff" stroke="none" />
      <circle cx="121" cy="238" r="29" stroke="#ccc" strokeWidth="12" />
      <circle cx="121" cy="238" r="36" strokeWidth="4" />
      <circle cx="121" cy="238" r="22" strokeDasharray="12 2" />
      <circle cx="121" cy="238" r="19" fill="#000" stroke="none" />
      <path d="M72 236h96M126 222l16 8M134 216l12 10" />
      <path d="M103 222v22M112 226v16M98 240h12M100 228h16" stroke="#0f0" strokeWidth="5" />
      <path d="M109.500 192v54M121.500 192v90M60 238.500h120" stroke="#f00" />
      <Label x={105} y={281} w={38} />

      <path d="M186 180h20M192 180v28M186 207h22M196 194h8" stroke="#ff0" strokeWidth="4" strokeDasharray="9 3" />
      <path d="M198 184h20M198 206h10" />
      <Label x={207} y={171} w={12} />
      <Label x={202} y={186} w={17} />
      <path d="M208 202h14v8h-14z" fill="#fff" />
      <Label x={174} y={213} w={54} />
      <path d="M174 224h54" />

      <Label x={207} y={237} w={20} />
      <path d="M226 250h14M176 248h12v8M184 260h22M218 250h-14" strokeWidth="5" />
      <path d="M190 250l8 12M208 246v18M186 263h38" stroke="#0f0" strokeWidth="4" />
      <path d="M212 262h28" />
      <path d="M224 260h15v6h-15z" stroke="#f00" />
      <Label x={183} y={267} w={15} />
      <Label x={186} y={279} w={54} />
      <path d="M183 290h57" />
      <path d="M285 195h63v18h-12v6h-6v12h-8v6h-37v-24h-6z" fill="#f00" stroke="none" />
      <path d="M282 186v9M289 186v9" stroke="#f00" strokeWidth="4" />
      <path d="M322 204h8M330 210v8" stroke="#000" strokeWidth="2" />
    </g>
  </svg>
);

const DocumentTabs = () => (
  <div className="flex h-[22px] shrink-0 items-end overflow-hidden bg-[#e5e5e5] text-[12px] leading-[18px] text-[#333]">
    <button type="button" className="relative flex h-5 w-[210px] shrink-0 items-center justify-end pr-5 whitespace-nowrap">
      <svg width="210" height="20" viewBox="0 0 210 20" fill="#f0f0f0" stroke="#999" className="absolute inset-0" aria-hidden="true">
        <path d="M1 20L18 2.500Q20 .5 22 .5H205.500L209.500 4V20" />
      </svg>
      <span className="relative">高燕村总体布置图0606.dwg</span>
    </button>
    {docTabs.map((tab) => (
      <button
        key={tab.name}
        type="button"
        className={`h-5 shrink-0 rounded-t-sm border-t border-r border-[#999] bg-[#f0f0f0] pl-[2px] whitespace-nowrap ${tab.width}`}
      >
        {tab.name}
      </button>
    ))}
    <button type="button" className="h-5 w-[156px] shrink-0 rounded-tl-sm border-t border-[#999] bg-[#f0f0f0] pl-2 whitespace-nowrap">
      12-14 100m3砖...000.dwg
    </button>
    <svg width="20" height="20" viewBox="0 0 20 20" className="shrink-0" aria-hidden="true">
      <path d="M0 0h14v20H0z" fill="#f0f0f0" />
      <path d="M1 20L17 2.500Q18 .5 20 .5V20z" fill="#fff" />
      <path d="M0 .5h10L14 5M1 20L17 2.500Q18 .5 20 .5" fill="none" stroke="#999" />
    </svg>
    <button type="button" className="h-5 shrink-0 border-t border-[#999] bg-white pr-4 pl-[14px] font-bold whitespace-nowrap">
      15-20 管道横断面、支墩、闸阀井.dwg
    </button>
  </div>
);

const LayoutTabs = () => (
  <div className="flex h-[17px] shrink-0 items-start border-t border-[#999] bg-[#e5e5e5] text-[12px] leading-[14px] text-[#444]">
    <div className="flex h-full w-16 items-center justify-between pr-[5px] pl-[2px]">
      {[
        { name: '第一页', d: 'M1.500 0v7M7 0v7L3 3.500z' },
        { name: '上一页', d: 'M6 0v7L2 3.500z' },
        { name: '下一页', d: 'M2 0v7l4-3.500z' },
        { name: '最后页', d: 'M6.500 0v7M1 0v7l4-3.500z' },
      ].map((nav) => (
        <button key={nav.name} type="button" aria-label={nav.name}>
          <svg width="8" height="7" viewBox="0 0 8 7" fill="#666" stroke="#666" strokeWidth=".6">
            <path d={nav.d} />
          </svg>
        </button>
      ))}
    </div>
    <svg width="10" height="16" viewBox="0 0 10 16" aria-hidden="true">
      <path d="M1 0l9 15.500V0z" fill="#fff" />
      <path d="M1 0l9 15.500" stroke="#888" />
    </svg>
    <button type="button" className="flex h-4 w-[29px] justify-center border-b border-[#999] bg-white text-[13px] font-bold whitespace-nowrap">
      模型
    </button>
    <svg width="12" height="16" viewBox="0 0 12 16" fill="none" stroke="#999" aria-hidden="true">
      <path d="M0 0h9L0 15.500z" fill="#fff" stroke="none" />
      <path d="M0 15.500L9 0M5 8l4 7.500h3" />
    </svg>
    <button type="button" className="flex h-4 w-9 justify-center border-b border-[#999]">
      布局1
    </button>
    <svg width="12" height="16" viewBox="0 0 12 16" fill="none" stroke="#999" aria-hidden="true">
      <path d="M0 15.500L9 0M5 8l4 7.500h3" />
    </svg>
    <button type="button" className="flex h-4 w-9 justify-center border-b border-[#999]">
      布局2
    </button>
    <svg width="12" height="16" viewBox="0 0 12 16" fill="none" stroke="#999" aria-hidden="true">
      <path d="M0 15.500L9 0" />
    </svg>
  </div>
);

const App = () => (
  <div className={`flex h-screen flex-col overflow-hidden bg-[#e5e5e5] ${uiFont}`}>
    <TitleBar />
    <MenuBar />
    <Ribbon />
    <div className="flex min-h-0 flex-1">
      <div className="w-[25px] shrink-0 pt-[7px] pl-[5px]">
        <button type="button" className="flex flex-col items-center gap-[2px] text-[12px] leading-[14px] text-[#333]">
          <svg width="15" height="16" viewBox="0 0 15 16" fill="none" stroke="#333" aria-hidden="true">
            <path d="M.500 8.500c0-4 1-4.500 4-4.500" />
            <path d="M4 1.500L7.500 4 4 6.500z" fill="#333" stroke="none" />
            <path d="M8.500 4V2.500h6V4M10.500 3v6h2V3" />
            <path d="M.500 11.500h14v4H.500z" fill="#ccc" />
            <path d="M3 13.500h2M7 13.500h5" />
          </svg>
          <span className="[text-orientation:sideways] [writing-mode:vertical-rl]">图库</span>
        </button>
      </div>
      <div className="flex min-w-0 flex-1 flex-col border-b-[5px] border-[#cbcbcb]">
        <div className="flex min-h-0 flex-1">
          <PropertyPanel />
          <div className="w-[6px] shrink-0 border-r-2 border-[#d8d8d8]" />
          <main className="relative flex min-w-0 flex-1 flex-col">
            <DocumentTabs />
            <div className="relative min-h-0 flex-1 overflow-hidden bg-black">
              <Drawing />
            </div>
            <LayoutTabs />
            <div className="absolute right-[14px] bottom-0 font-['Liberation_Sans',sans-serif] text-[18px] leading-[29px] text-[#a6a6a6] [text-shadow:1px_1px_1px_#888]">
              CSDN @biyezuopinvip
            </div>
          </main>
        </div>
      </div>
    </div>
  </div>
);

export default App;
